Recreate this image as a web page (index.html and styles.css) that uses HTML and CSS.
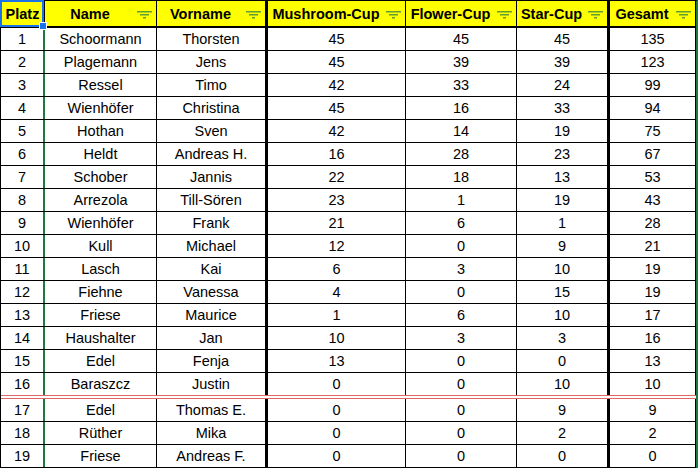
FILE: index.html
```html
<!DOCTYPE html>
<html lang="de">
<head>
<meta charset="utf-8">
<title>Rangliste</title>
<link rel="stylesheet" href="styles.css">
</head>
<body>
<div class="sheet">
  <div class="row head">
    <div class="cell c1 sel"><span class="lbl">Platz</span><span class="handle"></span></div>
    <div class="cell c2"><span class="lbl">Name</span><svg class="filt" viewBox="0 0 15 8"><path d="M0 0.75H15M3 3.75H12M6 6.75H9"/></svg></div>
    <div class="cell c3 thick"><span class="lbl">Vorname</span><svg class="filt" viewBox="0 0 15 8"><path d="M0 0.75H15M3 3.75H12M6 6.75H9"/></svg></div>
    <div class="cell c4"><span class="lbl">Mushroom-Cup</span><svg class="filt" viewBox="0 0 15 8"><path d="M0 0.75H15M3 3.75H12M6 6.75H9"/></svg></div>
    <div class="cell c5"><span class="lbl">Flower-Cup</span><svg class="filt" viewBox="0 0 15 8"><path d="M0 0.75H15M3 3.75H12M6 6.75H9"/></svg></div>
    <div class="cell c6 thick"><span class="lbl">Star-Cup</span><svg class="filt" viewBox="0 0 15 8"><path d="M0 0.75H15M3 3.75H12M6 6.75H9"/></svg></div>
    <div class="cell c7"><span class="lbl">Gesamt</span><svg class="filt" viewBox="0 0 15 8"><path d="M0 0.75H15M3 3.75H12M6 6.75H9"/></svg></div>
  </div>
  <div class="row"><div class="cell c1">1</div><div class="cell">Schoormann</div><div class="cell thick">Thorsten</div><div class="cell">45</div><div class="cell">45</div><div class="cell thick">45</div><div class="cell">135</div></div>
  <div class="row"><div class="cell c1">2</div><div class="cell">Plagemann</div><div class="cell thick">Jens</div><div class="cell">45</div><div class="cell">39</div><div class="cell thick">39</div><div class="cell">123</div></div>
  <div class="row"><div class="cell c1">3</div><div class="cell">Ressel</div><div class="cell thick">Timo</div><div class="cell">42</div><div class="cell">33</div><div class="cell thick">24</div><div class="cell">99</div></div>
  <div class="row"><div class="cell c1">4</div><div class="cell">Wienhöfer</div><div class="cell thick">Christina</div><div class="cell">45</div><div class="cell">16</div><div class="cell thick">33</div><div class="cell">94</div></div>
  <div class="row"><div class="cell c1">5</div><div class="cell">Hothan</div><div class="cell thick">Sven</div><div class="cell">42</div><div class="cell">14</div><div class="cell thick">19</div><div class="cell">75</div></div>
  <div class="row"><div class="cell c1">6</div><div class="cell">Heldt</div><div class="cell thick">Andreas H.</div><div class="cell">16</div><div class="cell">28</div><div class="cell thick">23</div><div class="cell">67</div></div>
  <div class="row"><div class="cell c1">7</div><div class="cell">Schober</div><div class="cell thick">Jannis</div><div class="cell">22</div><div class="cell">18</div><div class="cell thick">13</div><div class="cell">53</div></div>
  <div class="row"><div class="cell c1">8</div><div class="cell">Arrezola</div><div class="cell thick">Till-Sören</div><div class="cell">23</div><div class="cell">1</div><div class="cell thick">19</div><div class="cell">43</div></div>
  <div class="row"><div class="cell c1">9</div><div class="cell">Wienhöfer</div><div class="cell thick">Frank</div><div class="cell">21</div><div class="cell">6</div><div class="cell thick">1</div><div class="cell">28</div></div>
  <div class="row"><div class="cell c1">10</div><div class="cell">Kull</div><div class="cell thick">Michael</div><div class="cell">12</div><div class="cell">0</div><div class="cell thick">9</div><div class="cell">21</div></div>
  <div class="row"><div class="cell c1">11</div><div class="cell">Lasch</div><div class="cell thick">Kai</div><div class="cell">6</div><div class="cell">3</div><div class="cell thick">10</div><div class="cell">19</div></div>
  <div class="row"><div class="cell c1">12</div><div class="cell">Fiehne</div><div class="cell thick">Vanessa</div><div class="cell">4</div><div class="cell">0</div><div class="cell thick">15</div><div class="cell">19</div></div>
  <div class="row"><div class="cell c1">13</div><div class="cell">Friese</div><div class="cell thick">Maurice</div><div class="cell">1</div><div class="cell">6</div><div class="cell thick">10</div><div class="cell">17</div></div>
  <div class="row"><div class="cell c1">14</div><div class="cell">Haushalter</div><div class="cell thick">Jan</div><div class="cell">10</div><div class="cell">3</div><div class="cell thick">3</div><div class="cell">16</div></div>
  <div class="row"><div class="cell c1">15</div><div class="cell">Edel</div><div class="cell thick">Fenja</div><div class="cell">13</div><div class="cell">0</div><div class="cell thick">0</div><div class="cell">13</div></div>
  <div class="row cut"><div class="cell c1">16</div><div class="cell">Baraszcz</div><div class="cell thick">Justin</div><div class="cell">0</div><div class="cell">0</div><div class="cell thick">10</div><div class="cell">10</div></div>
  <div class="row"><div class="cell c1">17</div><div class="cell">Edel</div><div class="cell thick">Thomas E.</div><div class="cell">0</div><div class="cell">0</div><div class="cell thick">9</div><div class="cell">9</div></div>
  <div class="row"><div class="cell c1">18</div><div class="cell">Rüther</div><div class="cell thick">Mika</div><div class="cell">0</div><div class="cell">0</div><div class="cell thick">2</div><div class="cell">2</div></div>
  <div class="row"><div class="cell c1">19</div><div class="cell">Friese</div><div class="cell thick">Andreas F.</div><div class="cell">0</div><div class="cell">0</div><div class="cell thick">0</div><div class="cell">0</div></div>
</div>
</body>
</html>
```
FILE: styles.css
```css
html, body {
  margin: 0;
  padding: 0;
  background: #ffffff;
}
body {
  font-family: "Liberation Sans", Arial, sans-serif;
  font-size: 14.5px;
  color: #000;
}
.sheet {
  width: 695px;
  border-left: 1px solid #000;
  border-top: 1px solid #000;
  border-right: 2px solid #1e7a3c;
}
.row {
  display: grid;
  grid-template-columns: 44px 112px 111px 138px 111px 93px 86px;
  height: 23px;
  box-sizing: border-box;
  border-bottom: 1px solid #000;
}
.row.head {
  height: 27px;
  border-bottom: 2px solid #000;
  background: #ffff00;
  font-weight: bold;
}
.row.cut {
  height: 26px;
  border-bottom: 4px double #e06666;
}
.cell {
  box-sizing: border-box;
  border-right: 1px solid #000;
  display: flex;
  align-items: center;
  justify-content: center;
  white-space: nowrap;
  overflow: hidden;
  line-height: 1;
  padding-top: 1px;
}
.cell.thick {
  border-right: 3px solid #000;
}
.row .cell.c1 {
  border-right: 2px solid #1e7a3c;
}
.row.head .cell.c1 {
  border-right: 1px solid #000;
}
.head .cell {
  padding-right: 4px;
}
.head .cell.c1 {
  padding-right: 0;
  overflow: visible;
  position: relative;
}
.head .lbl {
  flex: 1;
  text-align: center;
}
.filt {
  width: 15px;
  height: 8px;
  flex: none;
  margin-left: 2px;
  margin-top: 1px;
}
.filt path {
  stroke: #5f9f33;
  stroke-width: 1.5;
  fill: none;
}
.sel::before {
  content: "";
  position: absolute;
  left: -1px;
  top: -1px;
  width: 44px;
  height: 27px;
  box-sizing: border-box;
  border: 2px solid #1a73e8;
}
.handle {
  position: absolute;
  left: 38px;
  top: 21px;
  width: 8px;
  height: 8px;
  box-sizing: border-box;
  background: #1a73e8;
  border: 1px solid #fff;
  z-index: 2;
}
```
